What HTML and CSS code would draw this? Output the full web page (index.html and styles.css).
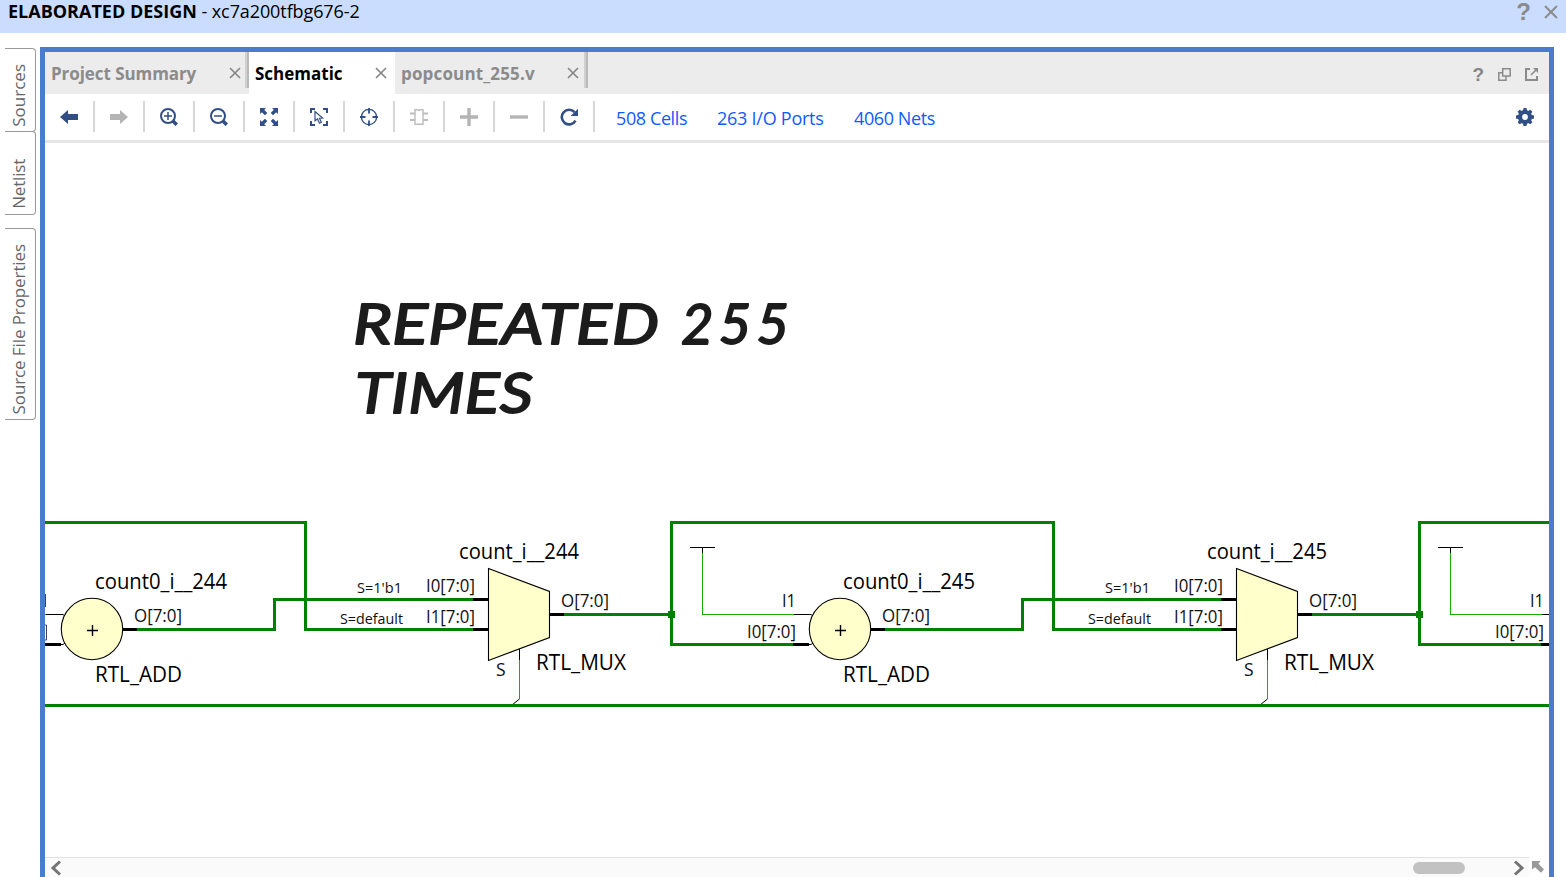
FILE: index.html
```html
<!DOCTYPE html>
<html lang="en">
<head>
<meta charset="utf-8">
<title>Elaborated Design</title>
<link rel="stylesheet" href="styles.css">
</head>
<body>
<header class="titlebar">
  <div class="title"><b class="title-name">ELABORATED DESIGN</b> <span class="title-part">- xc7a200tfbg676-2</span></div>
  <div class="title-actions">
    <span class="help-big">?</span>
    <svg width="14" height="14" viewBox="0 0 14 14"><path d="M1 1L13 13M13 1L1 13" stroke="#8b8b8b" stroke-width="2" fill="none"/></svg>
  </div>
</header>
<div class="workspace">
  <nav class="side">
    <div class="side-tab sources"><span>Sources</span></div>
    <div class="side-tab netlist"><span>Netlist</span></div>
    <div class="side-tab props"><span>Source File Properties</span></div>
  </nav>
  <main class="frame">
    <div class="tabs">
      <div class="tab tab-summary"><span class="t-summary">Project Summary</span><svg class="x" viewBox="0 0 12 12"><path d="M1 1L11 11M11 1L1 11"/></svg></div>
      <i class="tab-sep"></i>
      <div class="tab tab-schematic active"><span class="t-schematic">Schematic</span><svg class="x" viewBox="0 0 12 12"><path d="M1 1L11 11M11 1L1 11"/></svg></div>
      <div class="tab tab-file"><span class="t-file">popcount_255.v</span><svg class="x" viewBox="0 0 12 12"><path d="M1 1L11 11M11 1L1 11"/></svg></div>
      <i class="tab-sep"></i>
      <div class="tab-actions">
        <span class="help-small">?</span>
        <svg width="13" height="13" viewBox="0 0 13 13" fill="none" stroke="#8b8b8b" stroke-width="1.5"><path d="M4.7 8V.8H12.2V8H4.7ZM4.7 4.8H.8V12.2H8V8"/></svg>
        <svg width="13" height="13" viewBox="0 0 13 13" fill="none" stroke="#8b8b8b"><path d="M5 1H1V12H12V8" stroke-width="2"/><path d="M6 7L11 2" stroke-width="1.6"/><path d="M8 0H13V5Z" fill="#8b8b8b" stroke="none"/></svg>
      </div>
    </div>
    <div class="toolbar">
      <div class="tool"><svg viewBox="0 0 18 18"><path d="M0 9L8 2V6H18V12H8V16Z" fill="#314f84"/></svg></div>
      <div class="tool"><svg viewBox="0 0 18 18"><path d="M18 9L10 2V6H0V12H10V16Z" fill="#b4b4b4"/></svg></div>
      <div class="tool"><svg viewBox="0 0 18 18" fill="none" stroke="#314f84"><circle cx="8" cy="8" r="7" stroke-width="2"/><path d="M8 4V12M4 8H12" stroke-width="1.5"/><path d="M13 13L16.8 16.8" stroke-width="3.6"/></svg></div>
      <div class="tool"><svg viewBox="0 0 18 18" fill="none" stroke="#314f84"><circle cx="8" cy="8" r="7" stroke-width="2"/><path d="M4 8H12" stroke-width="1.5"/><path d="M13 13L16.8 16.8" stroke-width="3.6"/></svg></div>
      <div class="tool"><svg viewBox="0 0 18 18"><path d="M0 0H6L4.2 1.8L7.3 4.9L4.9 7.3L1.8 4.2L0 6ZM18 0V6L16.2 4.2L13.1 7.3L10.7 4.9L13.8 1.8L12 0ZM0 18V12L1.8 13.8L4.9 10.7L7.3 13.1L4.2 16.2L6 18ZM18 18H12L13.8 16.2L10.7 13.1L13.1 10.7L16.2 13.8L18 12Z" fill="#314f84"/></svg></div>
      <div class="tool"><svg viewBox="0 0 18 18" fill="none" stroke="#314f84"><path d="M1 5V1H5M13 1H17V5M1 13V17H5M17 13V17H13" stroke-width="2"/><path d="M5 3.5V12.8L7.4 11L9.6 15.2L11.4 14.2L9.4 10.2L12.6 10Z" stroke-width="1.2"/></svg></div>
      <div class="tool"><svg viewBox="0 0 18 18" fill="none" stroke="#314f84"><circle cx="9" cy="9" r="7.6" stroke-width="1.4"/><path d="M9 0V5.5M9 12.5V18M0 9H5.5M12.5 9H18" stroke-width="1.8"/></svg></div>
      <div class="tool"><svg viewBox="0 0 18 18" fill="none" stroke="#bdbdbd"><path d="M5 1.7H8Q9 3 10 1.7H13V16.3H5Z" stroke-width="1.4"/><path d="M0 5.5H5M0 12H5M13 5.5H18M13 12H18" stroke-width="2"/></svg></div>
      <div class="tool"><svg viewBox="0 0 18 18"><path d="M7.3 0H10.7V7.3H18V10.7H10.7V18H7.3V10.7H0V7.3H7.3Z" fill="#b4b4b4"/></svg></div>
      <div class="tool"><svg viewBox="0 0 18 18"><path d="M0 7.3H18V10.7H0Z" fill="#b4b4b4"/></svg></div>
      <div class="tool"><svg viewBox="0 0 18 18"><path d="M14.5 4.2A7.3 7.3 0 1 0 15.5 12.6" fill="none" stroke="#314f84" stroke-width="2.6"/><path d="M18 .8V8H10.6Z" fill="#314f84"/></svg></div>
      <div class="links"><a class="l1">508 Cells</a><a class="l2">263 I/O Ports</a><a class="l3">4060 Nets</a></div>
      <svg class="gear" viewBox="-9 -9 18 18"><g fill="#314f84"><path id="tooth" d="M-2.2 -6L-1.4 -9H1.4L2.2 -6V6L1.4 9H-1.4L-2.2 6Z"/><use href="#tooth" transform="rotate(45)"/><use href="#tooth" transform="rotate(90)"/><use href="#tooth" transform="rotate(135)"/><circle r="7"/></g><circle r="2.9" fill="#fff"/></svg>
    </div>
    <svg class="canvas" viewBox="45 143 1504 714" width="1504" height="714">
      <defs>
        <g id="stage">
          <path class="bus" d="M671.5 614.5V522.5H1053.5V629.5H1221M671.5 614.5V644.5H793M885 629.5H1022.5V599.5H1221M1312 614.5H1419.5"/>
          <path class="net" d="M702.5 553V614.5H794M1267.5 660V699"/>
          <path class="pin" d="M690 547.5H715M702.5 547V553M794 614.5H811L813 616M809 644.5H811L813 643M1267.5 649V660M1267.5 699L1260 705"/>
          <path class="pin-bus" d="M793 644.5H809M870 629.5H885M1221 599.5H1236M1221 629.5H1236M1298 614.5H1312"/>
          <rect x="1416" y="611" width="7" height="7" fill="#008000"/>
          <circle class="cell" cx="840" cy="629" r="30.7"/>
          <path class="cell" d="M1236.5 568.5L1297.5 591.5V637.5L1236.5 660.5Z"/>
          <path d="M835 630.5H846M840.5 625V636" stroke="#000" stroke-width="1.4"/>
        </g>
      </defs>
      <g class="note">
        <text x="353" y="344" textLength="306" lengthAdjust="spacingAndGlyphs">REPEATED</text>
        <text x="681" y="344" textLength="108" lengthAdjust="spacing">255</text>
        <text x="355" y="413" textLength="178" lengthAdjust="spacingAndGlyphs">TIMES</text>
      </g>
      <use href="#stage" x="-748"/>
      <use href="#stage"/>
      <use href="#stage" x="748"/>
      <path class="bus" d="M45 705.5H1549"/>

      <g class="name">
        <text x="95" y="589" textLength="132" lengthAdjust="spacingAndGlyphs">count0_i__244</text>
        <text x="95" y="682" textLength="87" lengthAdjust="spacingAndGlyphs">RTL_ADD</text>
        <text x="459" y="559" textLength="120" lengthAdjust="spacingAndGlyphs">count_i__244</text>
        <text x="536" y="670" textLength="90" lengthAdjust="spacingAndGlyphs">RTL_MUX</text>
        <text x="843" y="589" textLength="132" lengthAdjust="spacingAndGlyphs">count0_i__245</text>
        <text x="843" y="682" textLength="87" lengthAdjust="spacingAndGlyphs">RTL_ADD</text>
        <text x="1207" y="559" textLength="120" lengthAdjust="spacingAndGlyphs">count_i__245</text>
        <text x="1284" y="670" textLength="90" lengthAdjust="spacingAndGlyphs">RTL_MUX</text>
      </g>
      <g class="port">
        <path d="M45.5 594V607M44 625H46.5V640H44" fill="none" stroke="#444"/>
        <text x="134" y="622" textLength="48" lengthAdjust="spacingAndGlyphs">O[7:0]</text>
        <text x="426" y="592" textLength="49" lengthAdjust="spacingAndGlyphs">I0[7:0]</text>
        <text x="426" y="623" textLength="49" lengthAdjust="spacingAndGlyphs">I1[7:0]</text>
        <text x="561" y="607" textLength="48" lengthAdjust="spacingAndGlyphs">O[7:0]</text>
        <text x="496" y="676">S</text>
        <text x="782" y="607" textLength="14" lengthAdjust="spacingAndGlyphs">I1</text>
        <text x="747" y="638" textLength="49" lengthAdjust="spacingAndGlyphs">I0[7:0]</text>
        <text x="882" y="622" textLength="48" lengthAdjust="spacingAndGlyphs">O[7:0]</text>
        <text x="1174" y="592" textLength="49" lengthAdjust="spacingAndGlyphs">I0[7:0]</text>
        <text x="1174" y="623" textLength="49" lengthAdjust="spacingAndGlyphs">I1[7:0]</text>
        <text x="1309" y="607" textLength="48" lengthAdjust="spacingAndGlyphs">O[7:0]</text>
        <text x="1244" y="676">S</text>
        <text x="1530" y="607" textLength="14" lengthAdjust="spacingAndGlyphs">I1</text>
        <text x="1495" y="638" textLength="49" lengthAdjust="spacingAndGlyphs">I0[7:0]</text>
      </g>
      <g class="cond">
        <text x="357" y="593" textLength="45" lengthAdjust="spacingAndGlyphs">S=1'b1</text>
        <text x="340" y="624" textLength="63" lengthAdjust="spacingAndGlyphs">S=default</text>
        <text x="1105" y="593" textLength="45" lengthAdjust="spacingAndGlyphs">S=1'b1</text>
        <text x="1088" y="624" textLength="63" lengthAdjust="spacingAndGlyphs">S=default</text>
      </g>
    </svg>
    <div class="scroll">
      <div class="track">
        <svg width="12" height="16" viewBox="0 0 12 16"><path d="M10 1.5L3 8L10 14.5" fill="none" stroke="#737373" stroke-width="3"/></svg>
        <div class="thumb"></div>
        <svg width="12" height="16" viewBox="0 0 12 16"><path d="M2 1.5L9 8L2 14.5" fill="none" stroke="#737373" stroke-width="3"/></svg>
      </div>
      <svg class="corner" width="12" height="12" viewBox="0 0 12 12"><path d="M0 0H8.5L6.5 2.8L12 8.5L9 11.8L3 6.2L0 8.5Z" fill="#999"/></svg>
    </div>
  </main>
</div>
</body>
</html>
```
FILE: styles.css
```css
* { box-sizing: border-box; }
body {
  margin: 0;
  height: 877px;
  overflow: hidden;
  background: #fff;
  color: #000;
  font-family: "Open Sans", "Noto Sans", sans-serif;
  display: flex;
  flex-direction: column;
}
svg { display: block; flex: none; }

.titlebar {
  height: 33px;
  flex: none;
  background: #cbddff;
  display: flex;
  justify-content: space-between;
  padding: 0 8px;
}
.title { font-size: 18px; line-height: 23px; white-space: pre; }
.title-part { letter-spacing: -0.1px; }
.title-actions { display: flex; gap: 13px; padding-top: 5px; }
.help-big { font: bold 24px/13px "Liberation Sans", sans-serif; color: #8b8b8b; }

.workspace { display: flex; flex: 1; min-height: 0; }
.side { width: 40px; padding: 15px 0 0 5px; flex: none; }
.side-tab {
  width: 31px;
  border: 1px solid #999;
  border-left: 0;
  border-radius: 0 4px 4px 0;
  display: flex;
  align-items: center;
  justify-content: center;
  color: #666;
  font-size: 17px;
}
.side-tab span { writing-mode: vertical-rl; transform: rotate(180deg); white-space: nowrap; line-height: 24px; margin-right: 2px; }
.sources { height: 84px; padding-top: 10px; }
.netlist { height: 84px; margin-top: -1px; padding-top: 21px; }
.netlist span { letter-spacing: -0.2px; }
.props { height: 192px; margin-top: 13px; padding-top: 10px; }
.props span { letter-spacing: -0.1px; }

.frame {
  width: 1514px;
  margin-top: 14px;
  border: 5px solid #4a7bcf;
  border-bottom: 0;
  display: flex;
  flex-direction: column;
}
.tabs { height: 42px; flex: none; background: #ececec; display: flex; }
.tab {
  display: flex;
  align-items: center;
  justify-content: space-between;
  padding: 0 5px 0 6px;
  font-size: 17px;
  font-weight: 700;
  color: #8b8b8b;
  height: 42px;
}
.tab.active { background: #fff; color: #000; }
.tab-summary { width: 200px; padding-right: 4px; letter-spacing: -0.07px; }
.tab-schematic { width: 146px; padding-right: 8px; }
.tab-file { width: 189px; letter-spacing: 0.15px; }
.x { width: 12px; height: 12px; fill: none; stroke: #858585; stroke-width: 1.6; }
.tab-sep { width: 4px; height: 36px; background: linear-gradient(90deg, #d0d0d0 50%, #bababa 50%); }
.tab-actions { margin-left: auto; display: flex; align-items: center; gap: 14px; padding: 3px 11px 0 0; }
.help-small { font: bold 19px/20px "Liberation Sans", sans-serif; color: #858585; }

.toolbar { height: 49px; flex: none; border-bottom: 3px solid #e6e6e6; display: flex; padding-top: 7px; }
.tool { width: 50px; height: 31px; border-right: 2px solid #d6d6d6; display: flex; align-items: center; justify-content: center; }
.tool svg { width: 18px; height: 18px; }
.links { display: flex; padding-left: 21px; font-size: 18px; line-height: 35px; color: #0f5aff; white-space: nowrap; }
.links a { letter-spacing: -0.4px; }
.l1 { width: 101px; }
.links .l2 { width: 137px; letter-spacing: -0.25px; }
.gear { width: 18px; height: 18px; margin: 7px 15px 0 auto; }

.canvas { overflow: hidden; }
.canvas text { font-family: "Open Sans", "Noto Sans", sans-serif; }
.bus { fill: none; stroke: #008000; stroke-width: 3; shape-rendering: crispEdges; }
.net { fill: none; stroke: #1cad00; stroke-width: 1; shape-rendering: crispEdges; }
.pin { fill: none; stroke: #000; stroke-width: 1; }
.pin-bus { fill: none; stroke: #000; stroke-width: 3; shape-rendering: crispEdges; }
.cell { fill: #ffffcc; stroke: #000; stroke-width: 1.1; }
.name { font-size: 21px; }
.port { font-size: 17.5px; fill: #111; }
.cond { font-size: 14.5px; fill: #111; }
.canvas .note text { font-family: Lato, sans-serif; font-size: 56px; font-style: italic; font-weight: 400; fill: #1c1c1c; stroke: #1c1c1c; stroke-width: 1.8; stroke-linejoin: round; }

.scroll { height: 20px; display: flex; }
.track { width: 1484px; border-top: 1px solid #e2e2e2; background: #fafafa; display: flex; align-items: center; padding: 0 4px 0 5px; }
.thumb { width: 52px; height: 12px; border-radius: 6px; background: #c2c2c2; margin: 0 48px 0 auto; }
.corner { margin: 4px 0 0 3px; }
```
